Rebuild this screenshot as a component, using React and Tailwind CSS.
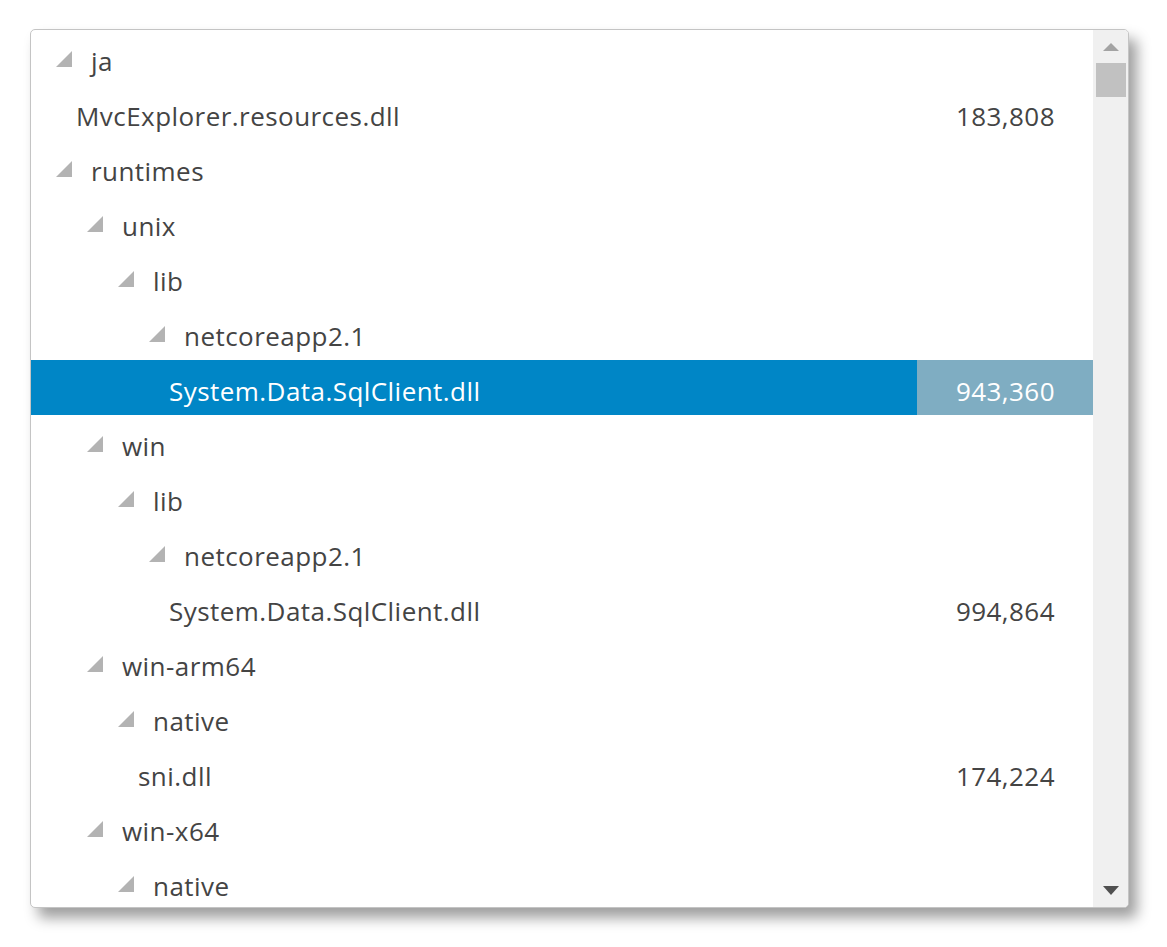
import React from 'react'

const rows = [
  { name: 'ja', level: 0, folder: true },
  { name: 'MvcExplorer.resources.dll', level: 1, size: '183,808' },
  { name: 'runtimes', level: 0, folder: true },
  { name: 'unix', level: 1, folder: true },
  { name: 'lib', level: 2, folder: true },
  { name: 'netcoreapp2.1', level: 3, folder: true },
  { name: 'System.Data.SqlClient.dll', level: 4, size: '943,360', selected: true },
  { name: 'win', level: 1, folder: true },
  { name: 'lib', level: 2, folder: true },
  { name: 'netcoreapp2.1', level: 3, folder: true },
  { name: 'System.Data.SqlClient.dll', level: 4, size: '994,864' },
  { name: 'win-arm64', level: 1, folder: true },
  { name: 'native', level: 2, folder: true },
  { name: 'sni.dll', level: 3, size: '174,224' },
  { name: 'win-x64', level: 1, folder: true },
  { name: 'native', level: 2, folder: true },
]

// indentation per level, 31px steps
const folderPad = ['pl-[25px]', 'pl-[56px]', 'pl-[87px]', 'pl-[118px]', 'pl-[149px]']
const leafPad = ['pl-[14px]', 'pl-[45px]', 'pl-[76px]', 'pl-[107px]', 'pl-[138px]']

function Expander() {
  return (
    <svg width="16" height="16" viewBox="0 0 16 16" className="shrink-0 mb-[6px] mr-[19px]">
      <polygon points="16,0 16,16 0,16" fill="#b3b3b3" />
    </svg>
  )
}

function Row({ row }) {
  const pad = row.folder ? folderPad[row.level] : leafPad[row.level]
  return (
    <div className={'flex h-[55px] ' + (row.selected ? 'bg-[#0086c6] text-white' : 'text-[#444444]')}>
      <div className={'flex flex-1 items-center pt-[8px] ' + pad}>
        {row.folder ? <Expander /> : null}
        <span>{row.name}</span>
      </div>
      <div className={'w-[176px] flex items-center justify-end pt-[8px] pr-[38px] ' + (row.selected ? 'bg-[#7fadc2]' : '')}>
        {row.size}
      </div>
    </div>
  )
}

export default function App() {
  return (
    <div className="min-h-[947px] bg-white pt-[29px] pl-[30px]" style={{ fontFamily: '"Open Sans", "Noto Sans", sans-serif' }}>
      <div className="w-[1099px] h-[879px] border border-[#c4c4c4] rounded-[5px] bg-white shadow-[8px_10px_14px_rgba(0,0,0,0.38)] flex overflow-hidden text-[26px] tracking-[0.45px]">
        <div className="flex-1 overflow-hidden">
          {rows.map((r, i) => (
            <Row key={i} row={r} />
          ))}
        </div>
        <div className="w-[35px] bg-[#f0f0f0] flex flex-col items-center">
          <div className="h-[33px] flex items-center justify-center">
            <svg width="16" height="8" viewBox="0 0 16 8">
              <polygon points="8,0 16,8 0,8" fill="#a3a3a3" />
            </svg>
          </div>
          <div className="w-[30px] h-[34px] bg-[#c1c1c1]" />
          <div className="flex-1" />
          <div className="h-[33px] flex items-center justify-center">
            <svg width="16" height="9" viewBox="0 0 16 9">
              <polygon points="0,0 16,0 8,9" fill="#505050" />
            </svg>
          </div>
        </div>
      </div>
    </div>
  )
}
